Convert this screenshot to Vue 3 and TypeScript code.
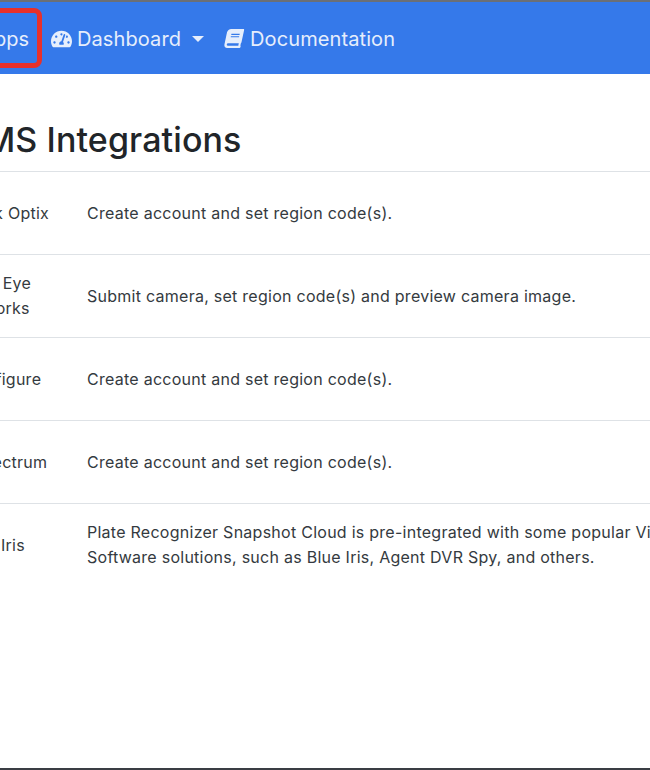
<script setup lang="ts">
interface Row { name: string; desc: string; indent: number }
const rows: Row[] = [
  { name: 'Network Optix', desc: 'Create account and set region code(s).', indent: 7 },
  { name: 'Eagle Eye Networks', desc: 'Submit camera, set region code(s) and preview camera image.', indent: 25 },
  { name: 'Configure', desc: 'Create account and set region code(s).', indent: 34 },
  { name: 'Spectrum', desc: 'Create account and set region code(s).', indent: 42 },
  { name: 'Blue Iris', desc: 'Plate Recognizer Snapshot Cloud is pre-integrated with some popular Video Management Software solutions, such as Blue Iris, Agent DVR Spy, and others.', indent: 32 }
]
</script>

<template>
  <div class="page">
    <nav class="nav">
      <a class="item apps">Apps</a>
      <a class="item dash">
        <svg class="gauge" viewBox="0 0 576 512" aria-hidden="true"><path fill="currentColor" d="M288 32C128.94 32 0 160.94 0 320c0 52.8 14.25 102.26 39.06 144.8 5.61 9.62 16.3 15.2 27.44 15.2h443c11.14 0 21.83-5.58 27.44-15.2C561.75 422.26 576 372.8 576 320c0-159.06-128.94-288-288-288zm0 64c14.71 0 26.58 10.13 30.32 23.65-1.11 2.26-2.64 4.23-3.45 6.67l-9.22 27.67c-5.13 3.49-10.97 6.01-17.64 6.01-17.67 0-32-14.33-32-32S270.33 96 288 96zM96 384c-17.67 0-32-14.33-32-32s14.33-32 32-32 32 14.33 32 32-14.33 32-32 32zm48-160c-17.67 0-32-14.33-32-32s14.33-32 32-32 32 14.33 32 32-14.33 32-32 32zm246.77-72.41l-61.33 184C343.13 347.33 352 364.54 352 384c0 11.72-3.38 22.55-8.88 32H232.88c-5.5-9.45-8.88-20.28-8.88-32 0-33.94 26.5-61.43 59.9-63.59l61.34-184.01c4.17-12.56 17.73-19.45 30.36-15.17 12.57 4.19 19.35 17.77 15.17 30.36zm14.66 57.2l15.52-46.55c3.47-1.29 7.13-2.23 11.05-2.23 17.67 0 32 14.33 32 32s-14.33 32-32 32c-11.38-.01-20.89-6.28-26.57-15.22zM480 384c-17.67 0-32-14.33-32-32s14.33-32 32-32 32 14.33 32 32-14.33 32-32 32z"/></svg>
        Dashboard
        <span class="caret"></span>
      </a>
      <a class="item docs">
        <svg class="book" viewBox="0 0 448 512" aria-hidden="true"><path fill="currentColor" d="M448 360V24c0-13.3-10.7-24-24-24H96C43 0 0 43 0 96v320c0 53 43 96 96 96h328c13.3 0 24-10.7 24-24v-16c0-7.5-3.5-14.3-8.9-18.7-4.2-15.4-4.2-59.3 0-74.7 5.4-4.3 8.9-11.1 8.9-18.6zM128 134c0-3.3 2.7-6 6-6h212c3.3 0 6 2.7 6 6v20c0 3.3-2.7 6-6 6H134c-3.3 0-6-2.7-6-6v-20zm0 64c0-3.3 2.7-6 6-6h212c3.3 0 6 2.7 6 6v20c0 3.3-2.7 6-6 6H134c-3.3 0-6-2.7-6-6v-20zm253.4 250H96c-17.7 0-32-14.3-32-32 0-17.6 14.4-32 32-32h285.4c-1.9 17.1-1.9 46.9 0 64z"/></svg>
        Documentation
      </a>
      <div class="highlight"></div>
    </nav>
    <main class="content">
      <h1 class="title">VMS Integrations</h1>
      <div class="table">
        <div v-for="r in rows" :key="r.name" class="row">
          <div class="name"><span class="label" :style="{ marginLeft: r.indent + 'px' }">{{ r.name }}</span></div>
          <div class="desc">{{ r.desc }}</div>
        </div>
      </div>
    </main>
    <div class="bottom"></div>
  </div>
</template>

<style>
html, body { margin: 0; padding: 0; background: #fff; overflow: hidden; }
</style>

<style scoped>
.page {
  width: 650px;
  height: 770px;
  display: flex;
  flex-direction: column;
  overflow: hidden;
  font-family: Inter, "Liberation Sans", sans-serif;
  background: #fff;
  color: #212529;
}
.nav {
  position: relative;
  flex: none;
  height: 71px;
  padding-top: 1px;
  border-top: 2px solid #6b6f76;
  background: #3579ea;
  display: flex;
  align-items: center;
  color: #e6eefc;
  font-size: 20px;
  letter-spacing: 0.1px;
}
.item { display: flex; align-items: center; white-space: nowrap; }
.apps { margin-left: -20px; width: 71px; }
.gauge { width: 21px; height: 20px; margin-right: 5px; }
.caret {
  width: 0;
  height: 0;
  margin-left: 11px;
  border-left: 6px solid transparent;
  border-right: 6px solid transparent;
  border-top: 6px solid #e6eefc;
}
.docs { margin-left: 21px; }
.book { width: 18px; height: 19px; margin-right: 7px; transform: skewX(-12deg); }
.highlight {
  position: absolute;
  left: -30px;
  top: 6px;
  width: 62px;
  height: 50px;
  border: 5px solid #e8302a;
  border-radius: 8px;
}
.content { flex: 1; margin-left: -70px; }
.title {
  margin: 0;
  height: 97px;
  box-sizing: border-box;
  padding: 45px 0 0 30px;
  font-size: 34px;
  line-height: 41px;
  font-weight: 500;
  letter-spacing: 0.1px;
  white-space: nowrap;
}
.row {
  display: flex;
  align-items: center;
  width: 900px;
  height: 82px;
  border-top: 1px solid #dee2e6;
  font-size: 16px;
  line-height: 25px;
  letter-spacing: 0.26px;
  color: #343a40;
}
.name { flex: none; width: 157px; }
.label { display: block; width: 125px; }
.desc { width: 720px; }
.bottom { flex: none; height: 2px; background: #3a3e44; }
</style>
